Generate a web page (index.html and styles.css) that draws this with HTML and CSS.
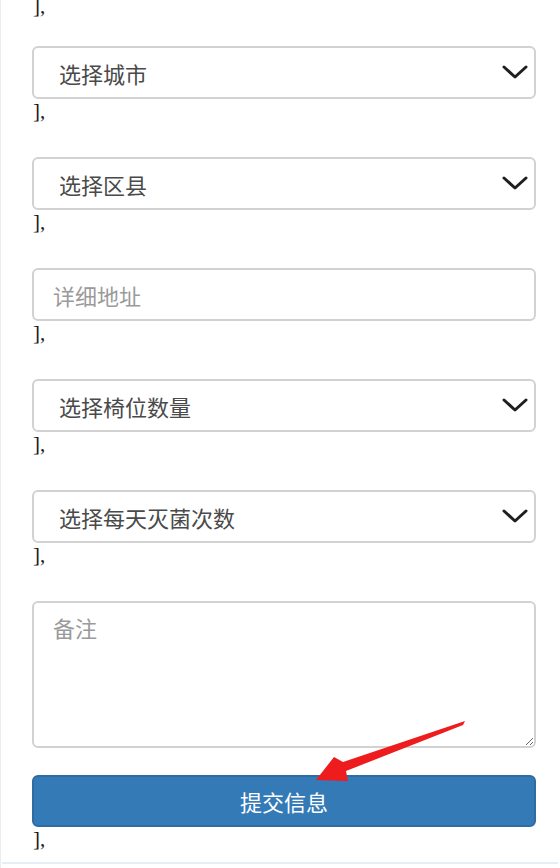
FILE: index.html
```html
<!DOCTYPE html>
<html lang="zh">
<head>
<meta charset="utf-8">
<title>提交信息</title>
<link rel="stylesheet" href="styles.css">
</head>
<body>
<div class="page">
  <div class="tail first">],</div>

  <div class="row">
    <div class="select-wrap">
      <select class="field select"><option>选择城市</option></select>
      <svg class="chev" viewBox="0 0 26 14" width="26" height="14"><polyline points="2,2 13,12 24,2"/></svg>
    </div>
    <div class="tail">],</div>
  </div>

  <div class="row">
    <div class="select-wrap">
      <select class="field select"><option>选择区县</option></select>
      <svg class="chev" viewBox="0 0 26 14" width="26" height="14"><polyline points="2,2 13,12 24,2"/></svg>
    </div>
    <div class="tail">],</div>
  </div>

  <div class="row">
    <input class="field input" type="text" placeholder="详细地址">
    <div class="tail">],</div>
  </div>

  <div class="row">
    <div class="select-wrap">
      <select class="field select"><option>选择椅位数量</option></select>
      <svg class="chev" viewBox="0 0 26 14" width="26" height="14"><polyline points="2,2 13,12 24,2"/></svg>
    </div>
    <div class="tail">],</div>
  </div>

  <div class="row">
    <div class="select-wrap">
      <select class="field select"><option>选择每天灭菌次数</option></select>
      <svg class="chev" viewBox="0 0 26 14" width="26" height="14"><polyline points="2,2 13,12 24,2"/></svg>
    </div>
    <div class="tail">],</div>
  </div>

  <textarea class="field area" placeholder="备注"></textarea>

  <button class="btn" type="button">提交信息</button>
  <div class="tail">],</div>

  <div class="footer"></div>

  <svg class="arrow" viewBox="0 0 560 868" width="560" height="868">
    <polygon points="465,721 343,762 334,757 316,780 348,781 346,771 463,725"/>
  </svg>
</div>
</body>
</html>
```

FILE: styles.css
```css
html, body {
  margin: 0;
  padding: 0;
  background: #fff;
}

body {
  font-family: "Noto Sans CJK SC", "Noto Sans", sans-serif;
  overflow: hidden;
}

.page {
  position: relative;
  display: flow-root;
  width: 560px;
  height: 868px;
  box-sizing: border-box;
  padding-left: 31px;
  border-left: 1px solid #ececec;
}

.row {
  margin-bottom: 34px;
}

.tail {
  font-family: "Liberation Serif", serif;
  font-size: 21px;
  line-height: 24px;
  height: 24px;
  color: #1a1a1a;
  padding-left: 1px;
}

.tail.first {
  margin-top: -6px;
  margin-bottom: 28px;
}

.select-wrap {
  position: relative;
  width: 504px;
}

.field {
  display: block;
  width: 504px;
  height: 53px;
  box-sizing: border-box;
  margin: 0;
  border: 2px solid #d2d2d2;
  border-radius: 6px;
  background: #fff;
  font-family: "Noto Sans CJK SC", "Noto Sans", sans-serif;
  font-size: 22px;
  color: #4a4a4a;
  outline: none;
}

.select {
  appearance: none;
  -webkit-appearance: none;
  padding: 0 50px 0 25px;
}

.input {
  padding: 0 19px;
}

.field::placeholder {
  color: #9a9a9a;
}

.chev {
  position: absolute;
  right: 8px;
  top: 19px;
  fill: none;
  stroke: #1f1f1f;
  stroke-width: 3;
  stroke-linecap: round;
  stroke-linejoin: round;
  pointer-events: none;
}

.area {
  height: 147px;
  padding: 9px 19px;
  line-height: 31px;
  resize: vertical;
}

.btn {
  display: block;
  width: 504px;
  height: 52px;
  margin-top: 27px;
  box-sizing: border-box;
  border: 2px solid #2e6da4;
  border-radius: 6px;
  background: #337ab7;
  color: #fff;
  font-family: "Noto Sans CJK SC", "Noto Sans", sans-serif;
  font-size: 22px;
  padding: 0;
}

.footer {
  margin-top: 11px;
  margin-left: -30px;
  width: 556px;
  border-top: 2px solid #e6edf7;
}

.arrow {
  position: absolute;
  left: -1px;
  top: 0;
  fill: #ee1c1c;
  pointer-events: none;
}
```
